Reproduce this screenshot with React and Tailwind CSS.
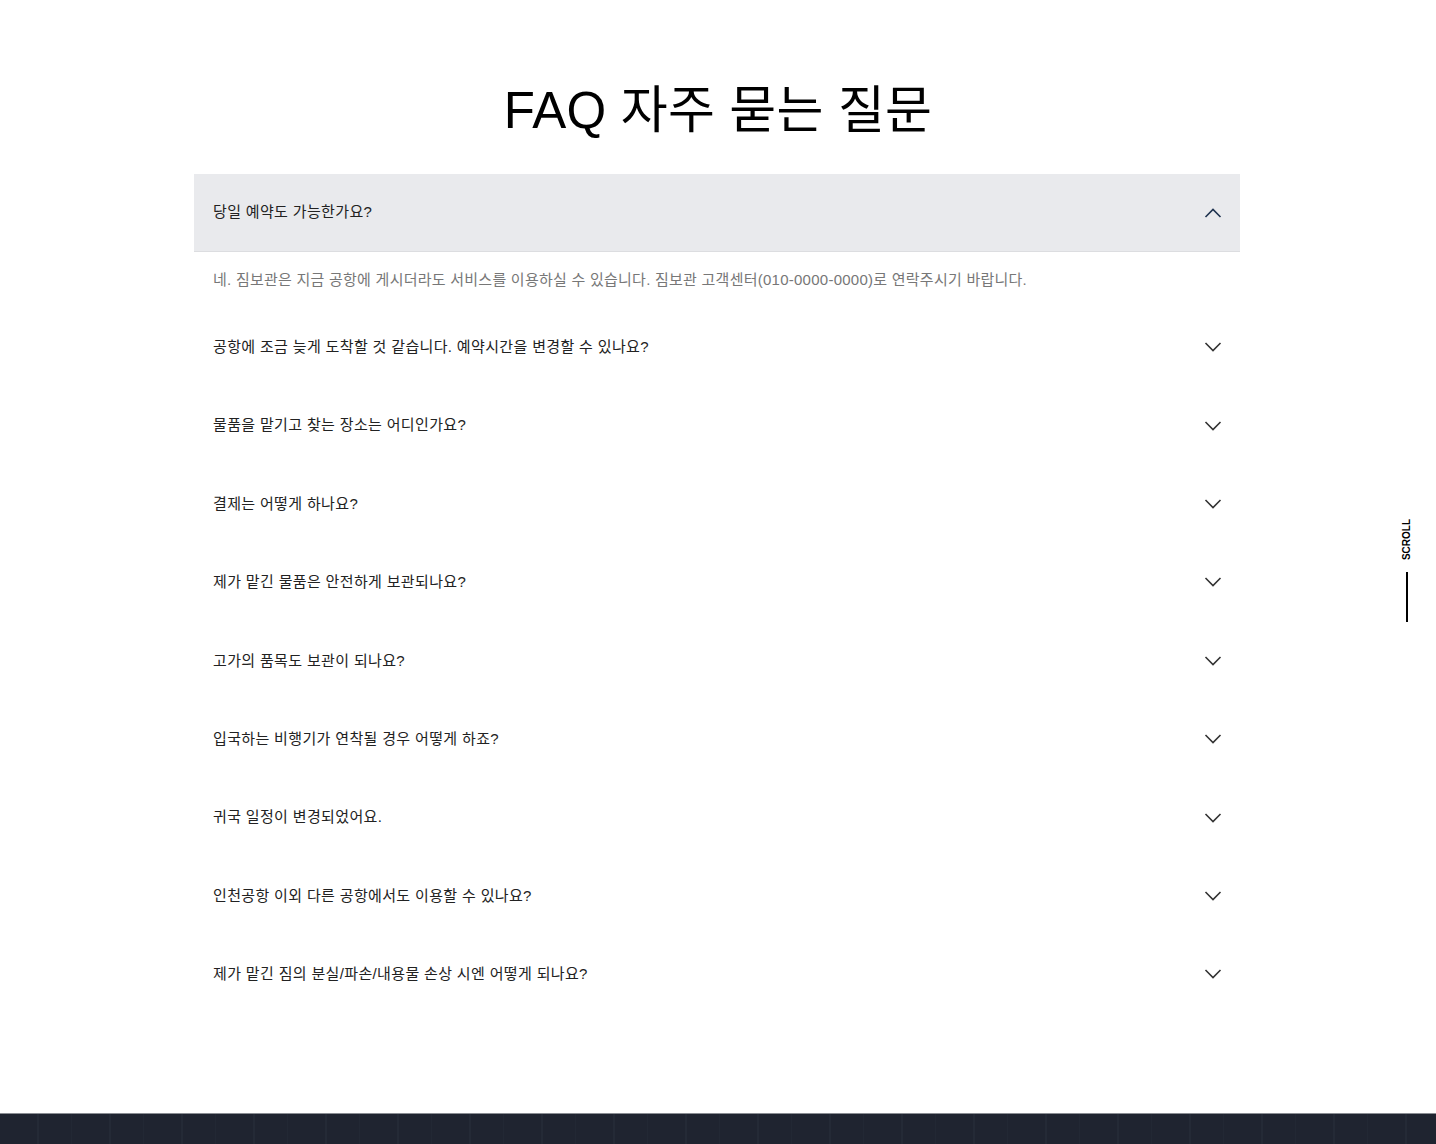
import React, { useState } from "react";

const faqs = [
  {
    q: "당일 예약도 가능한가요?",
    a: "네. 짐보관은 지금 공항에 게시더라도 서비스를 이용하실 수 있습니다. 짐보관 고객센터(010-0000-0000)로 연락주시기 바랍니다.",
  },
  { q: "공항에 조금 늦게 도착할 것 같습니다. 예약시간을 변경할 수 있나요?", a: "" },
  { q: "물품을 맡기고 찾는 장소는 어디인가요?", a: "" },
  { q: "결제는 어떻게 하나요?", a: "" },
  { q: "제가 맡긴 물품은 안전하게 보관되나요?", a: "" },
  { q: "고가의 품목도 보관이 되나요?", a: "" },
  { q: "입국하는 비행기가 연착될 경우 어떻게 하죠?", a: "" },
  { q: "귀국 일정이 변경되었어요.", a: "" },
  { q: "인천공항 이외 다른 공항에서도 이용할 수 있나요?", a: "" },
  { q: "제가 맡긴 짐의 분실/파손/내용물 손상 시엔 어떻게 되나요?", a: "" },
];

function Chevron({ up }) {
  return (
    <svg width="18" height="10" viewBox="0 0 18 10" fill="none" className="shrink-0">
      {up ? (
        <path d="M1.5 9L9 1.5L16.5 9" stroke="#1f3350" strokeWidth="1.6" />
      ) : (
        <path d="M1.5 1L9 8.5L16.5 1" stroke="#333" strokeWidth="1.6" />
      )}
    </svg>
  );
}

export default function App() {
  const [open, setOpen] = useState(0);
  return (
    <div className="relative min-h-[1144px] bg-white flex flex-col">
      <div className="font-['Liberation_Sans','Noto_Sans_CJK_KR',sans-serif] flex-1">
        <section className="pt-[81px] pb-[99px]">
          <h1 className="text-center text-[51px] leading-[60px] text-black font-normal mb-[33px] tracking-[0.2px]">
            FAQ 자주 묻는 질문
          </h1>
          <div className="w-[1046px] mx-auto -translate-x-[1px]">
            {faqs.map((f, i) => {
              const isOpen = open === i;
              return (
                <div key={i}>
                  <button
                    onClick={() => setOpen(isOpen ? -1 : i)}
                    className={`w-full flex items-center justify-between pl-[19px] pr-[18px] text-left ${
                      isOpen ? "h-[78px] bg-[#e9eaed] border-b border-[#dcdde0]" : "h-[78.4px] bg-white"
                    }`}
                  >
                    <span className="text-[15px] text-[#222] tracking-[0.35px]">{f.q}</span>
                    <Chevron up={isOpen} />
                  </button>
                  {isOpen && (
                    <div className="px-[19px] py-[18px] text-[15px] leading-[20px] text-[#777] tracking-[0.25px]">
                      {f.a}
                    </div>
                  )}
                </div>
              );
            })}
          </div>
        </section>
      </div>
      <footer className="h-[32px] border-t border-[#8a8d93] bg-[repeating-linear-gradient(90deg,#1f2430_0px,#1f2430_37px,#242a36_37px,#242a36_39px,#1f2430_39px,#1f2430_71px,#222834_71px,#222834_72px)]"></footer>

      <div className="absolute right-[19px] top-[519px] flex flex-col items-center w-[20px]">
        <div className="h-[40px] flex items-center justify-center">
          <span className="-rotate-90 text-[10px] font-bold text-black font-['Liberation_Sans',sans-serif] whitespace-nowrap">
            SCROLL
          </span>
        </div>
        <div className="mt-[13px] w-[2px] h-[50px] bg-black"></div>
      </div>
    </div>
  );
}
